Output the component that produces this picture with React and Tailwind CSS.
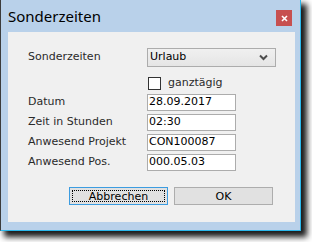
import React from 'react';

const fields = [
    { label: "Datum", value: "28.09.2017" },
    { label: "Zeit in Stunden", value: "02:30" },
    { label: "Anwesend Projekt", value: "CON100087" },
    { label: "Anwesend Pos.", value: "000.05.03" },
];

const labelFont = { fontFamily: '"DejaVu Sans", Verdana, sans-serif' };

export default function App() {
    return (
        <div className="w-[312px] h-[242px] bg-white overflow-hidden">
            <div className="w-[301px] h-[231px] flex flex-col bg-[#b9d1ea] border-l border-l-[#3c3c3c] border-r border-r-[#2bb8ec] border-b border-b-[#2bb8ec] shadow-[5px_5px_6px_1px_rgba(0,0,0,0.9)]">
                {/* title bar */}
                <div className="h-[32px] shrink-0 flex items-start justify-between pl-[7px] pr-[8px]">
                    <span className="mt-[6px] text-[15px] leading-[20px] text-black" style={{ fontFamily: '"Noto Sans", "Open Sans", sans-serif' }}>
                        Sonderzeiten
                    </span>
                    <div className="mt-[10px] w-[16px] h-[16px] bg-[#c75050] flex items-center justify-center">
                        <svg width="7" height="7" viewBox="0 0 7 7">
                            <path d="M1 1L6 6M6 1L1 6" stroke="white" strokeWidth="1.6" />
                        </svg>
                    </div>
                </div>

                {/* client area */}
                <div className="ml-[7px] mr-[5px] h-[190px] bg-[#f0f0f0] pl-[20px] pt-[16px] text-[11px] text-[#2a2a2a]" style={labelFont}>
                    <div className="flex items-center h-[19px]">
                        <span className="w-[119px]">Sonderzeiten</span>
                        <div className="w-[129px] h-[19px] border border-[#acacac] bg-gradient-to-b from-[#f0f0f0] to-[#e5e5e5] flex items-center justify-between pl-[2px] pr-[7px] text-black">
                            <span>Urlaub</span>
                            <svg width="9" height="7" viewBox="0 0 9 7">
                                <path d="M1 1.5L4.5 5L8 1.5" fill="none" stroke="#4d4d4d" strokeWidth="2" />
                            </svg>
                        </div>
                    </div>

                    <div className="flex items-center mt-[10px] h-[13px] pl-[120px]">
                        <div className="w-[13px] h-[13px] border border-[#333] bg-white" />
                        <span className="ml-[7px]">ganztägig</span>
                    </div>

                    <div className="mt-[4px] flex flex-col gap-[3px]">
                        {fields.map((f) => (
                            <div key={f.label} className="flex items-center h-[17px]">
                                <span className="w-[119px]">{f.label}</span>
                                <div className="w-[89px] h-[17px] border border-[#acacac] bg-white pl-[1px] flex items-center text-black">
                                    {f.value}
                                </div>
                            </div>
                        ))}
                    </div>

                    <div className="mt-[16px] flex gap-[6px] pl-[41px]">
                        <button className="w-[99px] h-[18px] border border-[#3c9ce0] bg-[#e1e1e1] p-[2px] text-black" style={labelFont}>
                            <div className="w-full h-full border border-dotted border-black flex items-center justify-center text-[11px] leading-none">
                                Abbrechen
                            </div>
                        </button>
                        <button className="w-[99px] h-[18px] border border-[#adadad] bg-[#e1e1e1] flex items-center justify-center text-[11px] leading-none text-black" style={labelFont}>
                            OK
                        </button>
                    </div>
                </div>
            </div>
        </div>
    );
}
